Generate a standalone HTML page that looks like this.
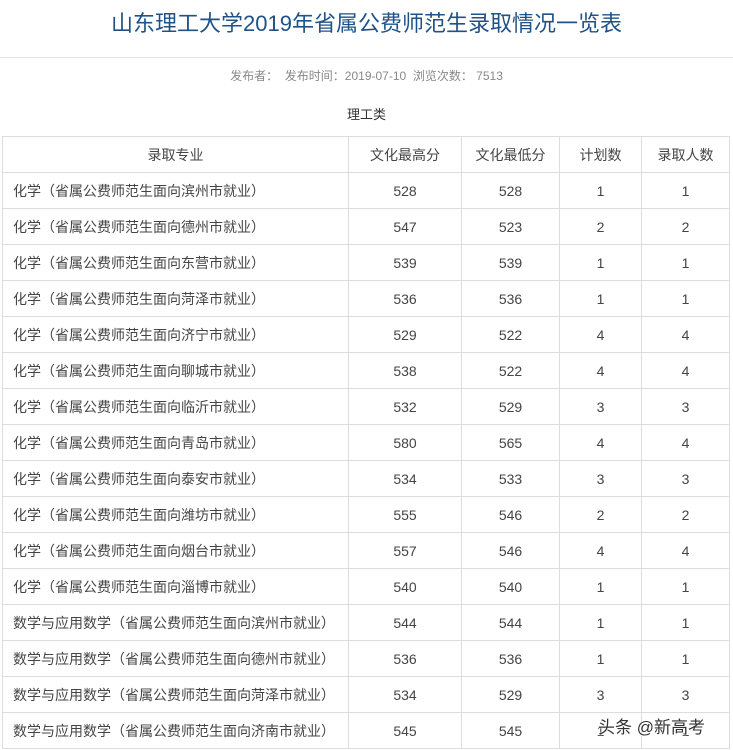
<!DOCTYPE html>
<html><head><meta charset="utf-8"><style>
html,body{margin:0;padding:0;background:#fff;width:733px;height:750px;overflow:hidden}
body{font-family:"Liberation Sans","Noto Sans CJK SC",sans-serif;color:#333}
.title{position:absolute;top:7px;left:0;width:733px;text-align:center;font-size:22px;color:#1f5288;line-height:34px}
.sep{position:absolute;top:57px;left:0;width:733px;height:1px;background:#e4e4e4}
.meta{position:absolute;top:67px;left:0;width:733px;text-align:center;font-size:12px;color:#888;line-height:18px}
.cat{position:absolute;top:105px;left:0;width:733px;text-align:center;font-size:13px;color:#333;line-height:20px}
table{position:absolute;top:136px;left:2px;border-collapse:collapse;font-size:14px;color:#444}
td{border:1px solid #ddd;height:35px;padding:0;text-align:center}
td.l{text-align:left;padding-left:10px}
.wm{position:absolute;left:598px;top:713px;font-size:17px;color:#333;text-shadow:0 0 2px #fff,0 0 2px #fff}
</style></head><body>
<div class="title">山东理工大学2019年省属公费师范生录取情况一览表</div>
<div class="sep"></div>
<div class="meta">发布者：&nbsp; 发布时间：2019-07-10 &nbsp;浏览次数： 7513</div>
<div class="cat">理工类</div>
<table>
<colgroup><col style="width:346px"><col style="width:113px"><col style="width:98px"><col style="width:82px"><col style="width:88px"></colgroup>
<tr><td>录取专业</td><td>文化最高分</td><td>文化最低分</td><td>计划数</td><td>录取人数</td></tr>
<tr><td class="l">化学（省属公费师范生面向滨州市就业）</td><td>528</td><td>528</td><td>1</td><td>1</td></tr>
<tr><td class="l">化学（省属公费师范生面向德州市就业）</td><td>547</td><td>523</td><td>2</td><td>2</td></tr>
<tr><td class="l">化学（省属公费师范生面向东营市就业）</td><td>539</td><td>539</td><td>1</td><td>1</td></tr>
<tr><td class="l">化学（省属公费师范生面向菏泽市就业）</td><td>536</td><td>536</td><td>1</td><td>1</td></tr>
<tr><td class="l">化学（省属公费师范生面向济宁市就业）</td><td>529</td><td>522</td><td>4</td><td>4</td></tr>
<tr><td class="l">化学（省属公费师范生面向聊城市就业）</td><td>538</td><td>522</td><td>4</td><td>4</td></tr>
<tr><td class="l">化学（省属公费师范生面向临沂市就业）</td><td>532</td><td>529</td><td>3</td><td>3</td></tr>
<tr><td class="l">化学（省属公费师范生面向青岛市就业）</td><td>580</td><td>565</td><td>4</td><td>4</td></tr>
<tr><td class="l">化学（省属公费师范生面向泰安市就业）</td><td>534</td><td>533</td><td>3</td><td>3</td></tr>
<tr><td class="l">化学（省属公费师范生面向潍坊市就业）</td><td>555</td><td>546</td><td>2</td><td>2</td></tr>
<tr><td class="l">化学（省属公费师范生面向烟台市就业）</td><td>557</td><td>546</td><td>4</td><td>4</td></tr>
<tr><td class="l">化学（省属公费师范生面向淄博市就业）</td><td>540</td><td>540</td><td>1</td><td>1</td></tr>
<tr><td class="l">数学与应用数学（省属公费师范生面向滨州市就业）</td><td>544</td><td>544</td><td>1</td><td>1</td></tr>
<tr><td class="l">数学与应用数学（省属公费师范生面向德州市就业）</td><td>536</td><td>536</td><td>1</td><td>1</td></tr>
<tr><td class="l">数学与应用数学（省属公费师范生面向菏泽市就业）</td><td>534</td><td>529</td><td>3</td><td>3</td></tr>
<tr><td class="l">数学与应用数学（省属公费师范生面向济南市就业）</td><td>545</td><td>545</td><td>1</td><td>1</td></tr>
</table>
<div class="wm">头条 @新高考</div>
</body></html>
